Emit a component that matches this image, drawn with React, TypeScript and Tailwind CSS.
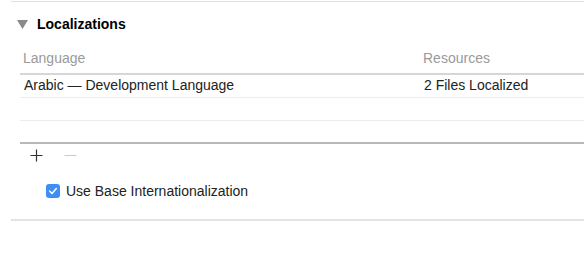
import React from 'react';

const font = { fontFamily: '"Liberation Sans", Arial, sans-serif' };

export default function App() {
  return (
    <div className="w-[584px] h-[264px] bg-white text-[14px] text-[#222]" style={font}>
      <div className="ml-[11px] pt-[1px]">
        <div className="h-px bg-[#e0e0e0]" />
        <div className="flex items-center h-[44px] pl-[6px] pt-[1px]">
          <svg width="11" height="9" viewBox="0 0 11 9" className="mr-[9px]">
            <polygon points="0,0 11,0 5.5,9" fill="#8a8a8a" />
          </svg>
          <span className="font-bold text-[14px] text-black">Localizations</span>
        </div>
      </div>

      <div className="ml-[20px]">
        <div className="flex items-center h-[29px] pb-[3px] text-[#9a9a9a] border-b-2 border-[#d6d6d6]">
          <div className="w-[400px] pl-[3px]">Language</div>
          <div className="pl-[3px]">Resources</div>
        </div>
        <div className="flex items-center h-[23px] pb-[2px] border-b border-[#ececec]">
          <div className="w-[400px] pl-[4px]">Arabic — Development Language</div>
          <div className="pl-[4px]">2 Files Localized</div>
        </div>
        <div className="h-[23px] border-b border-[#ececec]" />
        <div className="h-[23px] border-b-2 border-[#b8b8b8]" />
        <div className="flex items-center h-[23px] pl-[10px] gap-[21px]">
          <svg width="13" height="13" viewBox="0 0 13 13">
            <path d="M6.5 0.5v12M0.5 6.5h12" stroke="#333" strokeWidth="1.2" />
          </svg>
          <svg width="13" height="13" viewBox="0 0 13 13">
            <path d="M0.5 6.5h12" stroke="#cfcfcf" strokeWidth="1.2" />
          </svg>
        </div>
        <div className="flex items-center h-[22px] mt-[13px] pl-[26px] gap-[6px]">
          <div className="w-[14px] h-[14px] rounded-[3px] bg-[#3d8ff6] flex items-center justify-center">
            <svg width="10" height="10" viewBox="0 0 10 10">
              <path d="M1.8 5.2l2.2 2.3 4.3-5" fill="none" stroke="#fff" strokeWidth="1.6" strokeLinecap="round" strokeLinejoin="round" />
            </svg>
          </div>
          <span>Use Base Internationalization</span>
        </div>
      </div>

      <div className="ml-[11px] mt-[17px] h-[2px] bg-[#e3e3e3]" />
    </div>
  );
}
